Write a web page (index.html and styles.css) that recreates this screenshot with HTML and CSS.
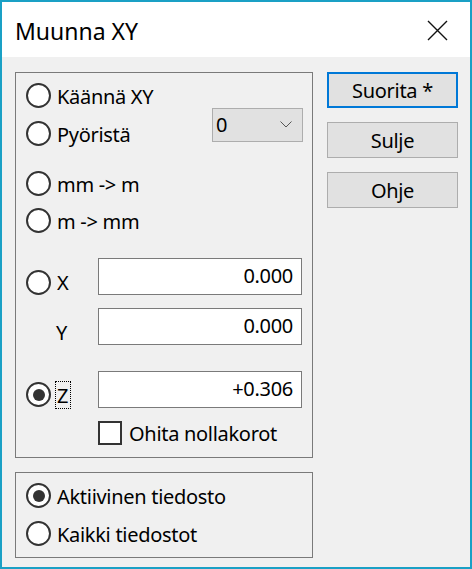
FILE: index.html
```html
<!DOCTYPE html>
<html lang="fi">
<head>
<meta charset="utf-8">
<title>Muunna XY</title>
<link rel="stylesheet" href="styles.css">
</head>
<body>
<div class="window">
  <div class="titlebar">
    <span class="title">Muunna XY</span>
    <svg class="close" width="21" height="21" viewBox="0 0 21 21"><path d="M1 1 L20 20 M20 1 L1 20" stroke="#111" stroke-width="1.4" fill="none"/></svg>
  </div>
  <div class="content">
    <div class="left">
      <div class="group main">
        <div class="top">
          <div class="radios">
            <div class="row"><span class="radio"></span><span class="lbl">Käännä XY</span></div>
            <div class="row gap13"><span class="radio"></span><span class="lbl">Pyöristä</span></div>
          </div>
          <div class="select"><span>0</span><svg class="chev" width="12" height="7" viewBox="0 0 12 7"><polyline points="0.5,0.5 6,6 11.5,0.5" stroke="#555" stroke-width="1" fill="none"/></svg></div>
        </div>
        <div class="row gap25"><span class="radio"></span><span class="lbl">mm -&gt; m</span></div>
        <div class="row gap12"><span class="radio"></span><span class="lbl">m -&gt; mm</span></div>
        <div class="frow gap25"><span class="radio"></span><span class="lbl">X</span><div class="field">0.000</div></div>
        <div class="frow gap13"><span class="lbl noradio">Y</span><div class="field">0.000</div></div>
        <div class="frow gap26"><span class="radio checked zr"></span><span class="lbl focus">Z</span><div class="field">+0.306</div></div>
        <div class="crow"><span class="check"></span><span class="lbl">Ohita nollakorot</span></div>
      </div>
      <div class="group files">
        <div class="row"><span class="radio checked"></span><span class="lbl">Aktiivinen tiedosto</span></div>
        <div class="row gap13"><span class="radio"></span><span class="lbl">Kaikki tiedostot</span></div>
      </div>
    </div>
    <div class="buttons">
      <div class="btn default">Suorita *</div>
      <div class="btn">Sulje</div>
      <div class="btn">Ohje</div>
    </div>
  </div>
</div>
</body>
</html>
```
FILE: styles.css
```css
* { box-sizing: border-box; }
html, body { margin: 0; padding: 0; }
body {
  font-family: "Noto Sans", "Open Sans", sans-serif;
  font-size: 20px;
  letter-spacing: -0.3px;
  color: #000;
  background: #f0f0f0;
}
.window {
  width: 472px;
  height: 569px;
  border: 2px solid #1aa0c5;
  background: #f0f0f0;
  display: flex;
  flex-direction: column;
}
.titlebar {
  height: 55px;
  background: #fff;
  display: flex;
  align-items: center;
  justify-content: space-between;
  padding: 0 22px 0 13px;
}
.title { font-size: 23px; line-height: 30px; margin-top: 2px; letter-spacing: 0; }
.close { display: block; margin-top: 1px; }
.content {
  display: flex;
  padding: 15px 0 0 13px;
  gap: 14px;
}
.left { display: flex; flex-direction: column; width: 298px; }
.group {
  border: 1px solid #7a7a7a;
  display: flex;
  flex-direction: column;
}
.main { padding: 10px 9px 12px 10px; }
.files { margin-top: 14px; padding: 10px 9px 11px 10px; }
.top { display: flex; justify-content: space-between; align-items: flex-start; }
.radios { display: flex; flex-direction: column; }
.row { display: flex; align-items: center; height: 25px; }
.gap12 { margin-top: 12px; }
.gap13 { margin-top: 13px; }
.gap25 { margin-top: 25px; }
.gap26 { margin-top: 26px; }
.lbl { line-height: 25px; white-space: nowrap; padding-top: 1px; }
.radio {
  width: 25px;
  height: 25px;
  border: 2px solid #333;
  border-radius: 50%;
  background: #fff;
  margin-right: 6px;
  flex: none;
  display: flex;
  align-items: center;
  justify-content: center;
}
.radio.checked::after {
  content: "";
  width: 12px;
  height: 12px;
  border-radius: 50%;
  background: #333;
}
.select {
  margin-top: 25px;
  width: 91px;
  height: 34px;
  background: #e1e1e1;
  border: 1px solid #adadad;
  display: flex;
  align-items: center;
  justify-content: space-between;
  padding: 0 10px 0 3px;
  line-height: 30px;
}
.chev { display: block; margin-top: -2px; }
.frow { display: flex; align-items: flex-end; height: 37px; }
.frow .lbl { width: 41px; }
.frow .lbl.noradio { margin-left: 30px; width: 42px; }
.frow .radio.zr { margin-bottom: 1px; }
.frow .lbl.focus {
  width: 14px;
  margin-left: -1px;
  margin-right: 28px;
  outline: 1px dotted #000;
  padding: 1px 0 0 1px;
  margin-bottom: 0;
}
.field {
  width: 204px;
  height: 37px;
  background: #fff;
  border: 1px solid #7a7a7a;
  text-align: right;
  padding-right: 8px;
  line-height: 33px;
}
.crow { display: flex; align-items: center; margin-top: 13px; padding-left: 72px; height: 24px; }
.check {
  width: 24px;
  height: 24px;
  border: 2px solid #333;
  background: #fff;
  margin-right: 7px;
  flex: none;
}
.buttons { display: flex; flex-direction: column; gap: 14px; width: 131px; }
.btn {
  height: 36px;
  background: #e1e1e1;
  border: 1px solid #adadad;
  text-align: center;
  line-height: 32px;
  padding-top: 2px;
}
.btn.default { border: 2px solid #0078d7; line-height: 30px; }
```
